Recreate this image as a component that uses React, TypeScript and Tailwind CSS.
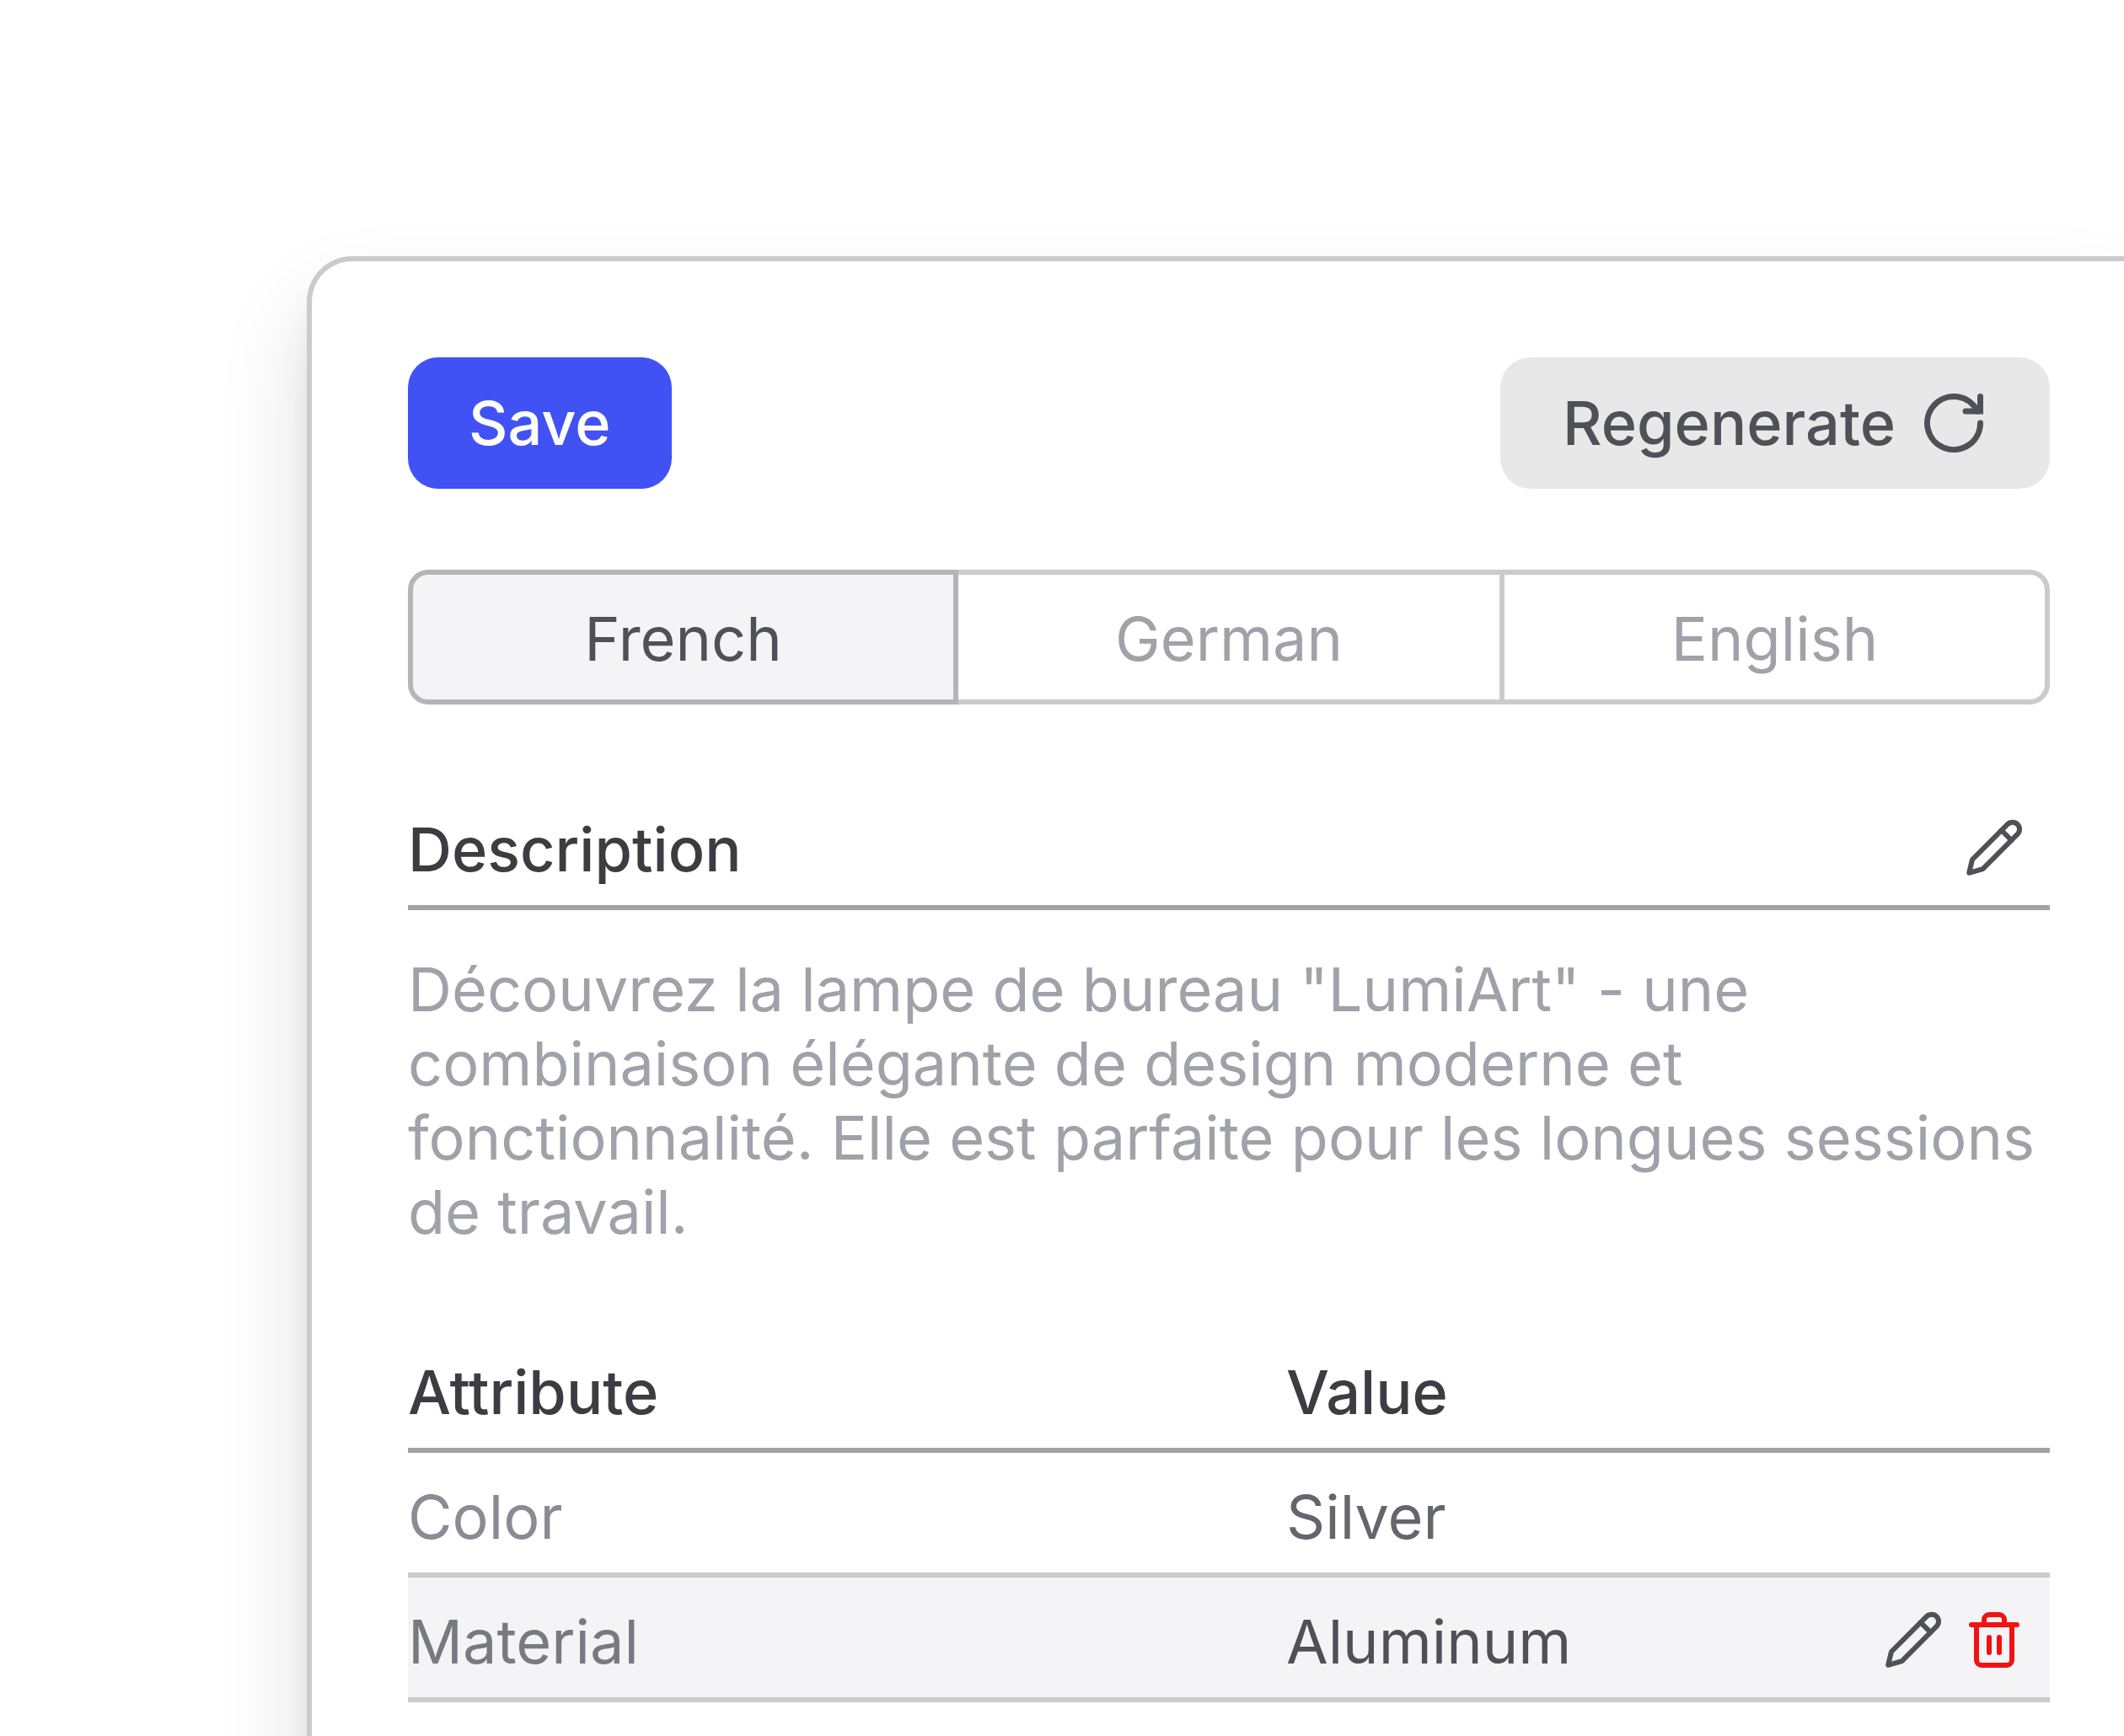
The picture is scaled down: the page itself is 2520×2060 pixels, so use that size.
import React from "react";

type Attribute = {
  name: string;
  value: string;
  nameStyle: string;
  valueStyle: string;
  rowStyle: string;
  editable: boolean;
};

const attributes: Attribute[] = [
  {
    name: "Color",
    value: "Silver",
    nameStyle: "text-[#8b8b94]",
    valueStyle: "text-[#65656d]",
    rowStyle: "bg-white",
    editable: false,
  },
  {
    name: "Material",
    value: "Aluminum",
    nameStyle: "text-[#797982]",
    valueStyle: "text-[#505057]",
    rowStyle: "bg-[#f4f4f6]",
    editable: true,
  },
];

const languages = [
  { label: "French", style: "w-[653px] shrink-0 rounded-l-[24px] border-[#b4b4bb] bg-[#f4f4f6] text-[#505057]" },
  { label: "German", style: "flex-1 border-x-0 border-[#cacacf] text-[#a1a1a9]" },
  { label: "English", style: "w-[653px] shrink-0 rounded-r-[24px] border-[#cacacf] text-[#a1a1a9]" },
];

function RefreshIcon() {
  return (
    <svg
      className="size-[72px]"
      viewBox="0 0 72 72"
      fill="none"
      stroke="currentColor"
      strokeWidth="7"
      strokeLinecap="round"
      strokeLinejoin="round"
      aria-hidden="true"
    >
      <path d="M67.5 36A31.5 31.5 0 1 1 64.2 22" />
      <path d="M67.5 4.5V22H50" strokeLinejoin="miter" />
    </svg>
  );
}

function PencilIcon() {
  return (
    <svg
      className="size-[72px]"
      viewBox="0 0 72 72"
      fill="none"
      stroke="currentColor"
      strokeWidth="6"
      strokeLinecap="round"
      strokeLinejoin="round"
      aria-hidden="true"
    >
      <path d="M10 50L51.8 8.1A8.3 8.3 0 0 1 63.6 19.9L22.5 61.2L6.2 65.8Z" />
      <path d="M44.7 15.3L56.5 27.1" />
    </svg>
  );
}

function TrashIcon() {
  return (
    <svg
      className="size-[72px]"
      viewBox="0 0 72 72"
      fill="none"
      stroke="currentColor"
      strokeWidth="6"
      strokeLinecap="round"
      strokeLinejoin="round"
      aria-hidden="true"
    >
      <path d="M9 18h54M15 18v42a6 6 0 0 0 6 6h30a6 6 0 0 0 6-6V18M24 18v-6a6 6 0 0 1 6-6h12a6 6 0 0 1 6 6v6M30 33v18M42 33v18" />
    </svg>
  );
}

export default function App() {
  return (
    <div className="h-screen overflow-hidden bg-white pl-[364px] pt-[304px] font-['Inter',sans-serif] text-[72px] leading-[88px]">
      <main className="min-h-[2400px] rounded-tl-[54px] border-l-[6px] border-t-[6px] border-[#cacacf] bg-white pl-[114px] pr-[88px] pt-[114px] shadow-[0_60px_108px_rgba(0,0,0,0.13),0_36px_32px_rgba(0,0,0,0.05)]">
        <div className="flex items-center justify-between font-medium">
          <button className="h-[156px] rounded-[36px] bg-[#4152f5] px-[72px] text-white">Save</button>
          <button className="flex h-[156px] items-center gap-[33px] rounded-[36px] bg-[#e8e8e8] pl-[74px] pr-[78px] text-[#505057]">
            Regenerate
            <RefreshIcon />
          </button>
        </div>

        <div className="mt-[96px] flex" role="tablist" aria-label="Language">
          {languages.map((language, index) => (
            <button
              key={language.label}
              role="tab"
              aria-selected={index === 0}
              className={`h-[160px] border-[6px] pt-1 text-center ${language.style}`}
            >
              {language.label}
            </button>
          ))}
        </div>

        <section className="mt-[128px]">
          <div className="flex items-center justify-between border-b-[6px] border-[#a1a1a9] pb-[22px] pr-[30px]">
            <h2 className="font-medium text-[#3d3c42]">Description</h2>
            <button aria-label="Edit description" className="pb-1 text-[#505057]">
              <PencilIcon />
            </button>
          </div>
          <p className="mt-[50px] text-[#a1a1a9]">
            Découvrez la lampe de bureau "LumiArt" - une combinaison élégante de design moderne et fonctionnalité. Elle est
            parfaite pour les longues sessions de travail.
          </p>
        </section>

        <table className="mt-[126px] w-full table-fixed border-separate border-spacing-0 text-left">
          <thead>
            <tr className="text-[#3d3c42]">
              <th className="w-[1042px] border-b-[6px] border-[#a1a1a9] pb-[22px] font-medium">Attribute</th>
              <th className="border-b-[6px] border-[#a1a1a9] pb-[22px] font-medium">Value</th>
            </tr>
          </thead>
          <tbody>
            {attributes.map((attribute) => (
              <tr key={attribute.name} className={attribute.rowStyle}>
                <td className={`border-b-[6px] border-[#cacacf] pb-[22px] pt-[32px] ${attribute.nameStyle}`}>
                  {attribute.name}
                </td>
                <td className={`border-b-[6px] border-[#cacacf] pb-[22px] pr-[30px] pt-[32px] ${attribute.valueStyle}`}>
                  <div className="flex items-center justify-between">
                    {attribute.value}
                    {attribute.editable && (
                      <div className="flex gap-[24px] pb-1">
                        <button aria-label={`Edit ${attribute.name}`} className="text-[#505057]">
                          <PencilIcon />
                        </button>
                        <button aria-label={`Delete ${attribute.name}`} className="text-[#f31212]">
                          <TrashIcon />
                        </button>
                      </div>
                    )}
                  </div>
                </td>
              </tr>
            ))}
          </tbody>
        </table>
      </main>
    </div>
  );
}
